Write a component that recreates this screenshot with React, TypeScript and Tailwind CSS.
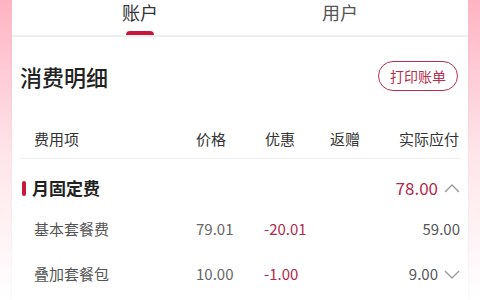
import React from "react";

const font = { fontFamily: '"Noto Sans CJK SC", "Noto Sans", sans-serif' };

const Chevron: React.FC<{ up?: boolean }> = ({ up }) => (
  <svg width="16" height="10" viewBox="0 0 16 10" className="ml-[6px]">
    <path
      d={up ? "M1 9 L8 2 L15 9" : "M1 1 L8 8 L15 1"}
      fill="none"
      stroke="#9a9a9a"
      strokeWidth="1.4"
    />
  </svg>
);

const rows = [
  { name: "基本套餐费", price: "79.01", off: "-20.01", pay: "59.00", chevron: false },
  { name: "叠加套餐包", price: "10.00", off: "-1.00", pay: "9.00", chevron: true },
];

export default function App() {
  return (
    <div
      className="w-[480px] h-[300px] overflow-hidden px-3 bg-gradient-to-b from-[#ffb3c2] via-[#ffe4ea] to-white"
      style={font}
    >
      {/* Tabs */}
      <div className="bg-white h-[37px] flex px-[28px] border-b-2 border-[#f1f1f1]">
        <div className="flex-1 flex flex-col items-center">
          <span className="text-[18px] leading-[24px] text-[#333]">账户</span>
          <div className="mt-auto w-[28px] h-[4px] rounded-t-full bg-[#c8173e]" />
        </div>
        <div className="flex-1 flex flex-col items-center">
          <span className="text-[18px] leading-[24px] text-[#555]">用户</span>
        </div>
      </div>

      {/* Card */}
      <div className="bg-white h-full px-2 shadow-[0_0_3px_rgba(0,0,0,0.06)]">
        <div className="flex items-center justify-between pt-[24px]">
          <h1 className="text-[22px] leading-[30px] font-medium text-[#222]">消费明细</h1>
          <button className="h-[30px] px-[11px] rounded-full border-[1.5px] border-[#b3304f] text-[14px] text-[#b3304f] leading-none mr-[2px]">
            打印账单
          </button>
        </div>

        <div className="flex items-center h-[38px] mt-[30px] text-[15px] text-[#333] border-b border-[#f0f0f0]">
          <span className="pl-[14px] w-[176px]">费用项</span>
          <span className="w-[69px]">价格</span>
          <span className="w-[65px]">优惠</span>
          <span className="w-[69px]">返赠</span>
          <span className="w-[60px] text-right">实际应付</span>
        </div>

        <div className="flex items-center h-[22px] mt-[18px] mb-[8px]">
          <div className="w-[4px] h-[15px] rounded-full bg-[#c8173e] ml-[2px] mr-[6px]" />
          <span className="text-[17px] font-bold text-[#222]">月固定费</span>
          <span className="ml-auto text-[17px] text-[#b3284e]">78.00</span>
          <Chevron up />
        </div>

        {rows.map((r) => (
          <div key={r.name} className="flex items-center h-[45px] text-[15px]">
            <span className="pl-[14px] w-[176px] text-[#555]">{r.name}</span>
            <span className="w-[68px] text-[#666]">{r.price}</span>
            <span className="w-[60px] text-[#b3284e]">{r.off}</span>
            <span className="ml-auto text-[#555]">{r.pay}</span>
            {r.chevron && <Chevron />}
          </div>
        ))}
      </div>
    </div>
  );
}
